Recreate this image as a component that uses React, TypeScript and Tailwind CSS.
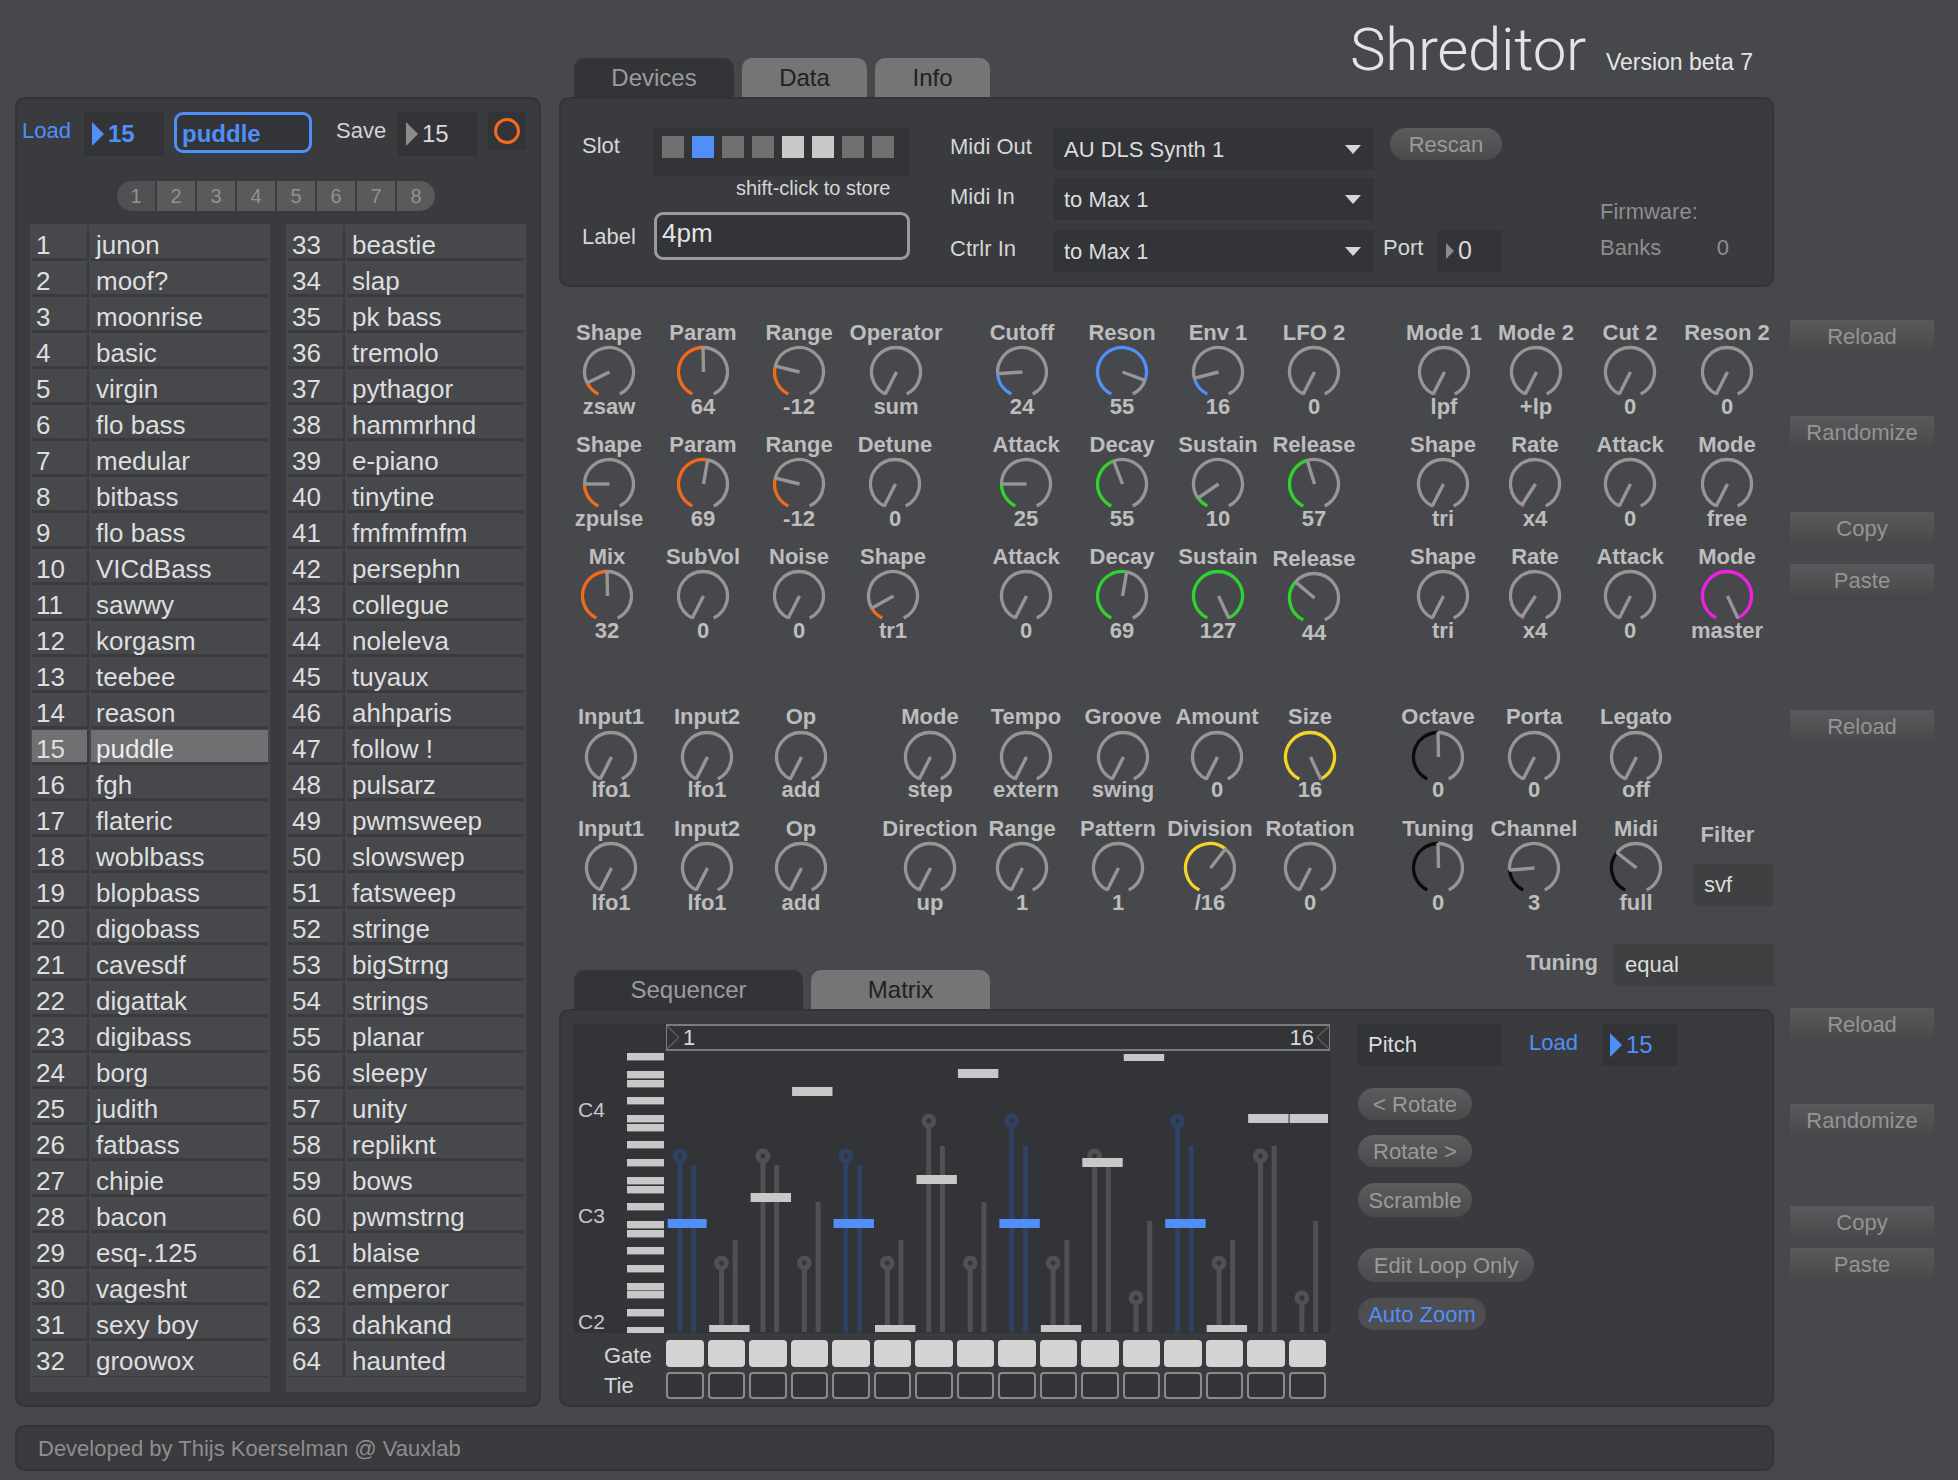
import React from 'react';

const presets = [
  'junon', 'moof?', 'moonrise', 'basic', 'virgin', 'flo bass', 'medular', 'bitbass',
  'flo bass', 'VICdBass', 'sawwy', 'korgasm', 'teebee', 'reason', 'puddle', 'fgh',
  'flateric', 'woblbass', 'blopbass', 'digobass', 'cavesdf', 'digattak', 'digibass', 'borg',
  'judith', 'fatbass', 'chipie', 'bacon', 'esq-.125', 'vagesht', 'sexy boy', 'groowox',
  'beastie', 'slap', 'pk bass', 'tremolo', 'pythagor', 'hammrhnd', 'e-piano', 'tinytine',
  'fmfmfmfm', 'persephn', 'collegue', 'noleleva', 'tuyaux', 'ahhparis', 'follow !', 'pulsarz',
  'pwmsweep', 'slowswep', 'fatsweep', 'stringe', 'bigStrng', 'strings', 'planar', 'sleepy',
  'unity', 'repliknt', 'bows', 'pwmstrng', 'blaise', 'emperor', 'dahkand', 'haunted',
];

const ORANGE = '#f26a1b';
const BLUE = '#4f8ff7';
const GREEN = '#2fd32f';
const YELLOW = '#f5d327';
const MAGENTA = '#f020e0';
const BLACK = '#0b0b0b';
const MIN = -154;

type KnobDef = { x: number; label: string; value: string; angle?: number; color?: string; low?: boolean };

const arcPoint = (deg: number, r: number) => {
  const a = (deg * Math.PI) / 180;
  return [28 + r * Math.sin(a), 28 - r * Math.cos(a)];
};

const arcPath = (from: number, to: number, r: number) => {
  const [x1, y1] = arcPoint(from, r);
  const [x2, y2] = arcPoint(to, r);
  return `M${x1} ${y1}A${r} ${r} 0 ${to - from > 180 ? 1 : 0} 1 ${x2} ${y2}`;
};

function Dial({ angle = MIN, color }: { angle?: number; color?: string }) {
  const [px, py] = arcPoint(angle, 25);
  return (
    <svg width="56" height="56" viewBox="0 0 56 56" className="block shrink-0">
      {angle < 154 && <path d={arcPath(angle, 154, 24.5)} fill="none" stroke="#969696" strokeWidth="3.3" />}
      {angle > MIN && color && <path d={arcPath(MIN, angle, 24.5)} fill="none" stroke={color} strokeWidth="3.3" />}
      <path d={`M28.5 28L${px} ${py}`} stroke="#969696" strokeWidth="3.4" />
    </svg>
  );
}

function KnobRow({ knobs, tight, className = '', children }: { knobs: KnobDef[]; tight?: boolean; className?: string; children?: React.ReactNode }) {
  let right = 559;
  return (
    <div className={`flex items-start ${className}`}>
      {knobs.map((k) => {
        const gap = k.x - 40 - right;
        right = k.x + 40;
        return (
          <div key={k.x} style={{ marginLeft: gap }} className={`flex w-[80px] flex-col items-center text-[22px] font-bold whitespace-nowrap text-[#bdbdbd] ${k.low ? 'mt-[2px]' : ''}`}>
            <div className={`h-[24px] ${tight ? 'leading-[24px]' : 'leading-[26px]'}`}>{k.label}</div>
            <Dial angle={k.angle} color={k.color} />
            <div className={`h-[24px] leading-[24px] ${tight ? 'mt-[-7px]' : 'mt-[-5px]'}`}>{k.value}</div>
          </div>
        );
      })}
      {children}
    </div>
  );
}

const row1: KnobDef[] = [
  { x: 609, label: 'Shape', value: 'zsaw', angle: -117, color: ORANGE },
  { x: 703, label: 'Param', value: '64', angle: 0, color: ORANGE },
  { x: 799, label: 'Range', value: '-12', angle: -76, color: ORANGE },
  { x: 896, label: 'Operator', value: 'sum' },
  { x: 1022, label: 'Cutoff', value: '24', angle: -94, color: BLUE },
  { x: 1122, label: 'Reson', value: '55', angle: 110, color: BLUE },
  { x: 1218, label: 'Env 1', value: '16', angle: -105, color: BLUE },
  { x: 1314, label: 'LFO 2', value: '0' },
  { x: 1444, label: 'Mode 1', value: 'lpf' },
  { x: 1536, label: 'Mode 2', value: '+lp' },
  { x: 1630, label: 'Cut 2', value: '0' },
  { x: 1727, label: 'Reson 2', value: '0' },
];
const row2: KnobDef[] = [
  { x: 609, label: 'Shape', value: 'zpulse', angle: -90, color: ORANGE },
  { x: 703, label: 'Param', value: '69', angle: 11, color: ORANGE },
  { x: 799, label: 'Range', value: '-12', angle: -76, color: ORANGE },
  { x: 895, label: 'Detune', value: '0' },
  { x: 1026, label: 'Attack', value: '25', angle: -90, color: GREEN },
  { x: 1122, label: 'Decay', value: '55', angle: -20, color: GREEN },
  { x: 1218, label: 'Sustain', value: '10', angle: -125, color: GREEN },
  { x: 1314, label: 'Release', value: '57', angle: -16, color: GREEN },
  { x: 1443, label: 'Shape', value: 'tri' },
  { x: 1535, label: 'Rate', value: 'x4', angle: -148, color: MAGENTA },
  { x: 1630, label: 'Attack', value: '0' },
  { x: 1727, label: 'Mode', value: 'free' },
];
const row3: KnobDef[] = [
  { x: 607, label: 'Mix', value: '32', angle: 0, color: ORANGE },
  { x: 703, label: 'SubVol', value: '0' },
  { x: 799, label: 'Noise', value: '0' },
  { x: 893, label: 'Shape', value: 'tr1', angle: -120, color: ORANGE },
  { x: 1026, label: 'Attack', value: '0' },
  { x: 1122, label: 'Decay', value: '69', angle: 11, color: GREEN },
  { x: 1218, label: 'Sustain', value: '127', angle: 154, color: GREEN },
  { x: 1314, label: 'Release', value: '44', angle: -49, color: GREEN, low: true },
  { x: 1443, label: 'Shape', value: 'tri' },
  { x: 1535, label: 'Rate', value: 'x4', angle: -148, color: MAGENTA },
  { x: 1630, label: 'Attack', value: '0' },
  { x: 1727, label: 'Mode', value: 'master', angle: 154, color: MAGENTA },
];
const row4: KnobDef[] = [
  { x: 611, label: 'Input1', value: 'lfo1' },
  { x: 707, label: 'Input2', value: 'lfo1' },
  { x: 801, label: 'Op', value: 'add' },
  { x: 930, label: 'Mode', value: 'step' },
  { x: 1026, label: 'Tempo', value: 'extern' },
  { x: 1123, label: 'Groove', value: 'swing' },
  { x: 1217, label: 'Amount', value: '0' },
  { x: 1310, label: 'Size', value: '16', angle: 154, color: YELLOW },
  { x: 1438, label: 'Octave', value: '0', angle: 0, color: BLACK },
  { x: 1534, label: 'Porta', value: '0' },
  { x: 1636, label: 'Legato', value: 'off' },
];
const row5: KnobDef[] = [
  { x: 611, label: 'Input1', value: 'lfo1' },
  { x: 707, label: 'Input2', value: 'lfo1' },
  { x: 801, label: 'Op', value: 'add' },
  { x: 930, label: 'Direction', value: 'up' },
  { x: 1022, label: 'Range', value: '1' },
  { x: 1118, label: 'Pattern', value: '1' },
  { x: 1210, label: 'Division', value: '/16', angle: 39, color: YELLOW },
  { x: 1310, label: 'Rotation', value: '0' },
  { x: 1438, label: 'Tuning', value: '0', angle: 0, color: BLACK },
  { x: 1534, label: 'Channel', value: '3', angle: -95, color: BLACK },
  { x: 1636, label: 'Midi', value: 'full', angle: -51, color: BLACK },
];

function Arrow({ color, small }: { color: string; small?: boolean }) {
  return (
    <svg width={small ? 8 : 12} height={small ? 16 : 24} viewBox="0 0 12 24" preserveAspectRatio="none" className="shrink-0">
      <path d="M0 0L12 12L0 24Z" fill={color} />
    </svg>
  );
}

function NumberBox({ value, blue, className = '' }: { value: string; blue?: boolean; className?: string }) {
  return (
    <div className={`flex h-[44px] w-[80px] items-center bg-[#333438] pl-[8px] ${className}`}>
      <Arrow color={blue ? BLUE : '#8c8c8c'} />
      <span className={`ml-[4px] text-[24px] ${blue ? 'font-bold text-[#4f8ff7]' : 'text-[#d8d8d8]'}`}>{value}</span>
    </div>
  );
}

function PresetTable({ start }: { start: number }) {
  return (
    <div className="h-[1168px] w-[240px] bg-[#47484c] pt-[2px] text-[26px] text-[#dedede]">
      {presets.slice(start, start + 32).map((name, i) => {
        const selected = start + i === 14;
        const line = i === 31 ? 'border-b' : 'border-b-[3px]';
        return (
          <div key={i} className="flex h-[36px] px-[2px]">
            <div className={`mr-[2px] h-[35px] w-[57px] border-r-[2px] border-[#3a3b3f] pl-[4px] leading-[39px] ${line} ${selected ? 'bg-[#707072]' : ''}`}>{start + i + 1}</div>
            <div className={`h-[35px] flex-1 border-[#3a3b3f] pl-[5px] leading-[39px] ${line} ${selected ? 'bg-[#707072] text-[#ececec]' : ''}`}>{name}</div>
          </div>
        );
      })}
    </div>
  );
}

function LeftPanel() {
  return (
    <aside className="mt-[97px] h-[1310px] w-[526px] rounded-[10px] border-2 border-[#333438] bg-[#3a3b3f] pt-[13px]">
      <div className="flex items-start pl-[5px]">
        <div className="h-[36px] w-[62px] text-[22px] leading-[38px] text-[#4f8ff7]">Load</div>
        <NumberBox value="15" blue />
        <div className="ml-[10px] flex h-[41px] w-[138px] items-center rounded-[9px] border-[3px] border-[#4f8ff7] bg-[#333438] pt-[2px] pl-[5px] text-[24px] font-bold text-[#4f8ff7]">puddle</div>
        <div className="ml-[24px] h-[36px] w-[62px] text-[22px] leading-[38px] text-[#d4d4d4]">Save</div>
        <NumberBox value="15" />
        <div className="ml-[10px] flex h-[38px] w-[38px] items-center justify-center bg-[#333438]">
          <div className="h-[26px] w-[26px] rounded-full border-[3px] border-[#f26a1b]" />
        </div>
      </div>
      <div className="mt-[25px] ml-[100px] flex h-[30px] w-[318px] gap-[2px] text-[20px] leading-[30px] text-[#929292]">
        {[1, 2, 3, 4, 5, 6, 7, 8].map((n) => (
          <div key={n} className={`flex-1 text-center ${n === 1 ? 'rounded-l-full bg-[#505052]' : 'bg-[#5a5a5b]'} ${n === 8 ? 'rounded-r-full' : ''}`}>{n}</div>
        ))}
      </div>
      <div className="mt-[13px] flex gap-[16px] pl-[13px]">
        <PresetTable start={0} />
        <PresetTable start={32} />
      </div>
    </aside>
  );
}

function Tab({ label, active, className = '' }: { label: string; active?: boolean; className?: string }) {
  return (
    <div className={`flex h-[39px] items-center justify-center rounded-t-[10px] text-[24px] ${active ? 'bg-[#333438] text-[#9c9c9c]' : 'bg-[#757575] text-[#202124]'} ${className}`}>{label}</div>
  );
}

function Select({ value }: { value: string }) {
  return (
    <div className="flex h-[42px] w-[320px] items-center justify-between bg-[#333438] pr-[13px] pl-[10px] text-[22px] text-[#dcdcdc]">
      {value}
      <svg width="16" height="9" viewBox="0 0 16 9"><path d="M0 0H16L8 9Z" fill="#d6d6d6" /></svg>
    </div>
  );
}

function Pill({ label, className = '' }: { label: string; className?: string }) {
  return (
    <div className={`flex items-center justify-center rounded-full bg-gradient-to-b from-[#5c5c5e] to-[#4a4a4c] text-[22px] text-[#9a9a9a] ${className}`}>{label}</div>
  );
}

function DevicesPanel() {
  const slots = [0, 1, 0, 0, 2, 2, 0, 0];
  return (
    <div className="flex h-[190px] rounded-[10px] border-2 border-[#333438] bg-[#3a3b3f] pt-[29px] pl-[21px] text-[22px] text-[#d6d6d6]">
      <div className="w-[328px]">
        <div className="flex">
          <div className="h-[36px] w-[72px] leading-[36px]">Slot</div>
          <div className="flex h-[48px] w-[256px] gap-[8px] bg-[#333438] pt-[8px] pl-[8px]">
            {slots.map((s, i) => (
              <div key={i} className={`h-[22px] w-[22px] ${s === 1 ? 'bg-[#4f8ff7]' : s === 2 ? 'bg-[#c8c8c8]' : 'bg-[#707070]'}`} />
            ))}
          </div>
        </div>
        <div className="h-[24px] pl-[154px] text-[20px] leading-[24px] whitespace-nowrap">shift-click to store</div>
        <div className="mt-[12px] flex items-center">
          <div className="w-[72px]">Label</div>
          <div className="h-[48px] w-[256px] rounded-[9px] border-[3px] border-[#9a9a9a] bg-[#333438] pl-[5px] text-[26px] leading-[36px] text-[#e4e4e4]">4pm</div>
        </div>
      </div>
      <div className="ml-[40px] flex flex-col">
        <div className="flex items-start">
          <div className="h-[36px] w-[104px] leading-[38px]">Midi Out</div>
          <Select value="AU DLS Synth 1" />
          <Pill label="Rescan" className="ml-[16px] h-[32px] w-[112px]" />
        </div>
        <div className="mt-[8px] flex items-start">
          <div className="h-[36px] w-[104px] leading-[38px]">Midi In</div>
          <Select value="to Max 1" />
        </div>
        <div className="mt-[10px] flex items-start">
          <div className="h-[36px] w-[104px] leading-[38px]">Ctrlr In</div>
          <Select value="to Max 1" />
          <div className="h-[36px] w-[64px] pl-[9px] leading-[36px]">Port</div>
          <div className="flex h-[42px] w-[64px] items-center bg-[#333438] pl-[8px]">
            <Arrow color="#8c8c8c" small />
            <span className="ml-[4px] text-[25px] text-[#d8d8d8]">0</span>
          </div>
        </div>
      </div>
      <div className="ml-[98px] flex w-[151px] flex-col pt-[72px] text-[22px] leading-[24px] text-[#8e8e8e]">
        <div>Firmware:</div>
        <div className="mt-[12px] flex justify-between pr-[22px]">
          <span>Banks</span>
          <span>0</span>
        </div>
      </div>
    </div>
  );
}

// key tops on the little keyboard, in page coordinates
const keyTops = [1053, 1071, 1080, 1097, 1115, 1124, 1141, 1159, 1177, 1186, 1203, 1221, 1230, 1247, 1265, 1283, 1291, 1309, 1327];

const steps = [
  { knob: 1156, bar: 1165, pitch: 1219, blue: true },
  { knob: 1263, bar: 1240, pitch: 1325 },
  { knob: 1156, bar: 1165, pitch: 1193 },
  { knob: 1263, bar: 1202, pitch: 1087 },
  { knob: 1156, bar: 1165, pitch: 1219, blue: true },
  { knob: 1263, bar: 1240, pitch: 1325 },
  { knob: 1121, bar: 1146, pitch: 1175 },
  { knob: 1263, bar: 1202, pitch: 1069 },
  { knob: 1121, bar: 1146, pitch: 1219, blue: true },
  { knob: 1263, bar: 1240, pitch: 1325 },
  { knob: 1156, bar: 1165, pitch: 1158 },
  { knob: 1298, bar: 1221, pitch: 1054 },
  { knob: 1121, bar: 1146, pitch: 1219, blue: true },
  { knob: 1263, bar: 1240, pitch: 1325 },
  { knob: 1156, bar: 1146, pitch: 1114 },
  { knob: 1298, bar: 1221, pitch: 1114 },
];

function StepGraph() {
  return (
    <svg viewBox="574 1024 756 309" width="756" height="309" className="block">
      {keyTops.map((y) => (
        <rect key={y} x="627" y={y} width="37" height="7.4" fill="#c8c8c8" />
      ))}
      {steps.map((s, i) => {
        const x = 680 + 41.46 * i;
        const tone = s.blue ? '#2f4264' : '#515155';
        return (
          <g key={i}>
            <rect x={x - 2.5} y={s.knob} width="5" height={1332 - s.knob} fill={tone} />
            <rect x={x + 11.2} y={s.bar} width="5" height={1332 - s.bar} fill={tone} />
            <circle cx={x} cy={s.knob} r="4.9" fill="#333438" stroke={tone} strokeWidth="5" />
          </g>
        );
      })}
      {steps.map((s, i) => {
        const x = 667.7 + 41.46 * i;
        const h = s.pitch === 1054 || s.pitch === 1325 ? 7 : 9;
        const w = i === 0 ? 39 : i === 15 ? 38.4 : 40.4;
        return <rect key={i} x={x} y={s.pitch} width={w} height={h} fill={s.blue ? BLUE : '#c8c8c8'} />;
      })}
    </svg>
  );
}

function Sequencer() {
  const cells = Array.from({ length: 16 }, (_, i) => i);
  return (
    <div className="flex h-[398px] rounded-[10px] border-2 border-[#333438] bg-[#3a3b3f] pt-[13px] pl-[13px]">
      <div className="w-[756px]">
        <div className="relative h-[309px] w-[756px] bg-[#333438]">
          <StepGraph />
          <div className="absolute top-[0px] left-[92px] flex h-[27px] w-[664px] items-center justify-between border-x border-y-2 border-[#7c7c7c] bg-[#333438] text-[22px] text-[#d8d8d8]">
            <div className="flex items-center">
              <svg width="12" height="23" viewBox="0 0 12 23"><path d="M0 0L12 11.5L0 23" fill="none" stroke="#5c5c5e" strokeWidth="1.5" /></svg>
              <span className="ml-[4px]">1</span>
            </div>
            <div className="flex items-center">
              <span className="mr-[3px]">16</span>
              <svg width="12" height="23" viewBox="0 0 12 23"><path d="M12 0L0 11.5L12 23" fill="none" stroke="#5c5c5e" strokeWidth="1.5" /></svg>
            </div>
          </div>
          <div className="absolute top-[74px] left-[4px] text-[21px] leading-[24px] text-[#c8c8c8]">C4</div>
          <div className="absolute top-[180px] left-[4px] text-[21px] leading-[24px] text-[#c8c8c8]">C3</div>
          <div className="absolute top-[286px] left-[4px] text-[21px] leading-[24px] text-[#c8c8c8]">C2</div>
        </div>
        <div className="mt-[7px] flex text-[22px] text-[#d6d6d6]">
          <div className="h-[27px] w-[92px] pl-[30px] leading-[32px]">Gate</div>
          <div className="grid h-[27px] grid-cols-[repeat(16,37.5px)] gap-x-[4px]">
            {cells.map((i) => (
              <div key={i} className="h-[27px] rounded-[4px] bg-[#d4d4d4]" />
            ))}
          </div>
        </div>
        <div className="mt-[5px] flex text-[22px] text-[#d6d6d6]">
          <div className="h-[27px] w-[92px] pl-[30px] leading-[28px]">Tie</div>
          <div className="grid h-[27px] grid-cols-[repeat(16,37.5px)] gap-x-[4px]">
            {cells.map((i) => (
              <div key={i} className="h-[27px] rounded-[4px] border-2 border-[#8a8a8a] bg-[#333438]" />
            ))}
          </div>
        </div>
      </div>
      <div className="ml-[28px] flex flex-col items-start text-[22px]">
        <div className="flex items-start">
          <div className="flex h-[42px] w-[144px] items-center bg-[#333438] pb-[2px] pl-[10px] text-[#dcdcdc]">Pitch</div>
          <div className="ml-[27px] h-[36px] w-[73px] leading-[38px] text-[#4f8ff7]">Load</div>
          <div className="flex h-[42px] w-[75px] items-center bg-[#333438] pl-[8px]">
            <Arrow color={BLUE} />
            <span className="ml-[4px] text-[24px] text-[#4f8ff7]">15</span>
          </div>
        </div>
        <Pill label="< Rotate" className="mt-[22px] h-[32px] w-[114px]" />
        <Pill label="Rotate >" className="mt-[15px] h-[32px] w-[114px]" />
        <Pill label="Scramble" className="mt-[16px] h-[34px] w-[114px]" />
        <Pill label="Edit Loop Only" className="mt-[31px] h-[34px] w-[176px]" />
        <div className="mt-[16px] flex h-[32px] w-[128px] items-center justify-center rounded-full bg-[#4e4e50] text-[#4f8ff7]">Auto Zoom</div>
      </div>
    </div>
  );
}

function SideButton({ label, className = '' }: { label: string; className?: string }) {
  return (
    <div className={`flex h-[32px] w-[144px] items-center justify-center bg-gradient-to-b from-[#5a5a5c] to-[#49494b] text-[22px] text-[#949494] ${className}`}>{label}</div>
  );
}

export default function App() {
  return (
    <div className="flex h-[1480px] w-[1958px] overflow-hidden bg-[#47484c] pl-[15px] font-['Liberation_Sans',Arial,sans-serif]">
      <div className="w-[1759px]">
        <div className="flex h-[1407px] gap-[18px]">
          <LeftPanel />
          <main className="w-[1215px]">
            <div className="flex h-[97px] items-end">
              <div className="flex gap-[8px] pl-[15px]">
                <Tab label="Devices" active className="w-[160px]" />
                <Tab label="Data" className="w-[125px]" />
                <Tab label="Info" className="w-[115px]" />
              </div>
              <div className="ml-[360px] flex h-[97px] items-start pt-[16px] whitespace-nowrap text-[#e4e4e4]">
                <span className="font-['Roboto',sans-serif] text-[60px] leading-[68px] font-light tracking-[-0.3px]">Shreditor</span>
                <span className="mt-[31px] ml-[20px] text-[23px] leading-[30px]">Version beta 7</span>
              </div>
            </div>
            <DevicesPanel />
            <div className="pt-[33px]">
              <KnobRow knobs={row1} />
              <KnobRow knobs={row2} className="mt-[13px]" />
              <KnobRow knobs={row3} className="mt-[13px]" />
              <KnobRow knobs={row4} tight className="mt-[60px]" />
              <KnobRow knobs={row5} className="mt-[14px]">
                <div className="ml-[18px] w-[79px] text-[22px]">
                  <div className="h-[36px] pt-[7px] pr-[12px] text-center leading-[24px] font-bold text-[#bdbdbd]">Filter</div>
                  <div className="mt-[12px] flex h-[42px] items-center bg-[#3f4042] pb-[2px] pl-[10px] text-[#dcdcdc]">svf</div>
                </div>
              </KnobRow>
            </div>
            <div className="mt-[29px] flex h-[65px] items-start justify-between">
              <div className="mt-[26px] flex gap-[8px] pl-[15px]">
                <Tab label="Sequencer" active className="w-[229px]" />
                <Tab label="Matrix" className="w-[179px]" />
              </div>
              <div className="flex items-center">
                <div className="mr-[16px] mb-[5px] text-[22px] font-bold text-[#bdbdbd]">Tuning</div>
                <div className="flex h-[42px] w-[160px] items-center bg-[#3f4042] pb-[2px] pl-[11px] text-[22px] text-[#dcdcdc]">equal</div>
              </div>
            </div>
            <Sequencer />
          </main>
        </div>
        <footer className="mt-[18px] flex h-[46px] items-center rounded-[10px] border-2 border-[#333438] bg-[#3a3b3f] pl-[21px] text-[22px] text-[#8e8e8e]">Developed by Thijs Koerselman @ Vauxlab</footer>
      </div>
      <div className="ml-[16px] flex flex-col pt-[320px]">
        <SideButton label="Reload" />
        <SideButton label="Randomize" className="mt-[64px]" />
        <SideButton label="Copy" className="mt-[64px]" />
        <SideButton label="Paste" className="mt-[20px]" />
        <SideButton label="Reload" className="mt-[114px]" />
        <SideButton label="Reload" className="mt-[266px]" />
        <SideButton label="Randomize" className="mt-[64px]" />
        <SideButton label="Copy" className="mt-[70px]" />
        <SideButton label="Paste" className="mt-[10px]" />
      </div>
    </div>
  );
}
